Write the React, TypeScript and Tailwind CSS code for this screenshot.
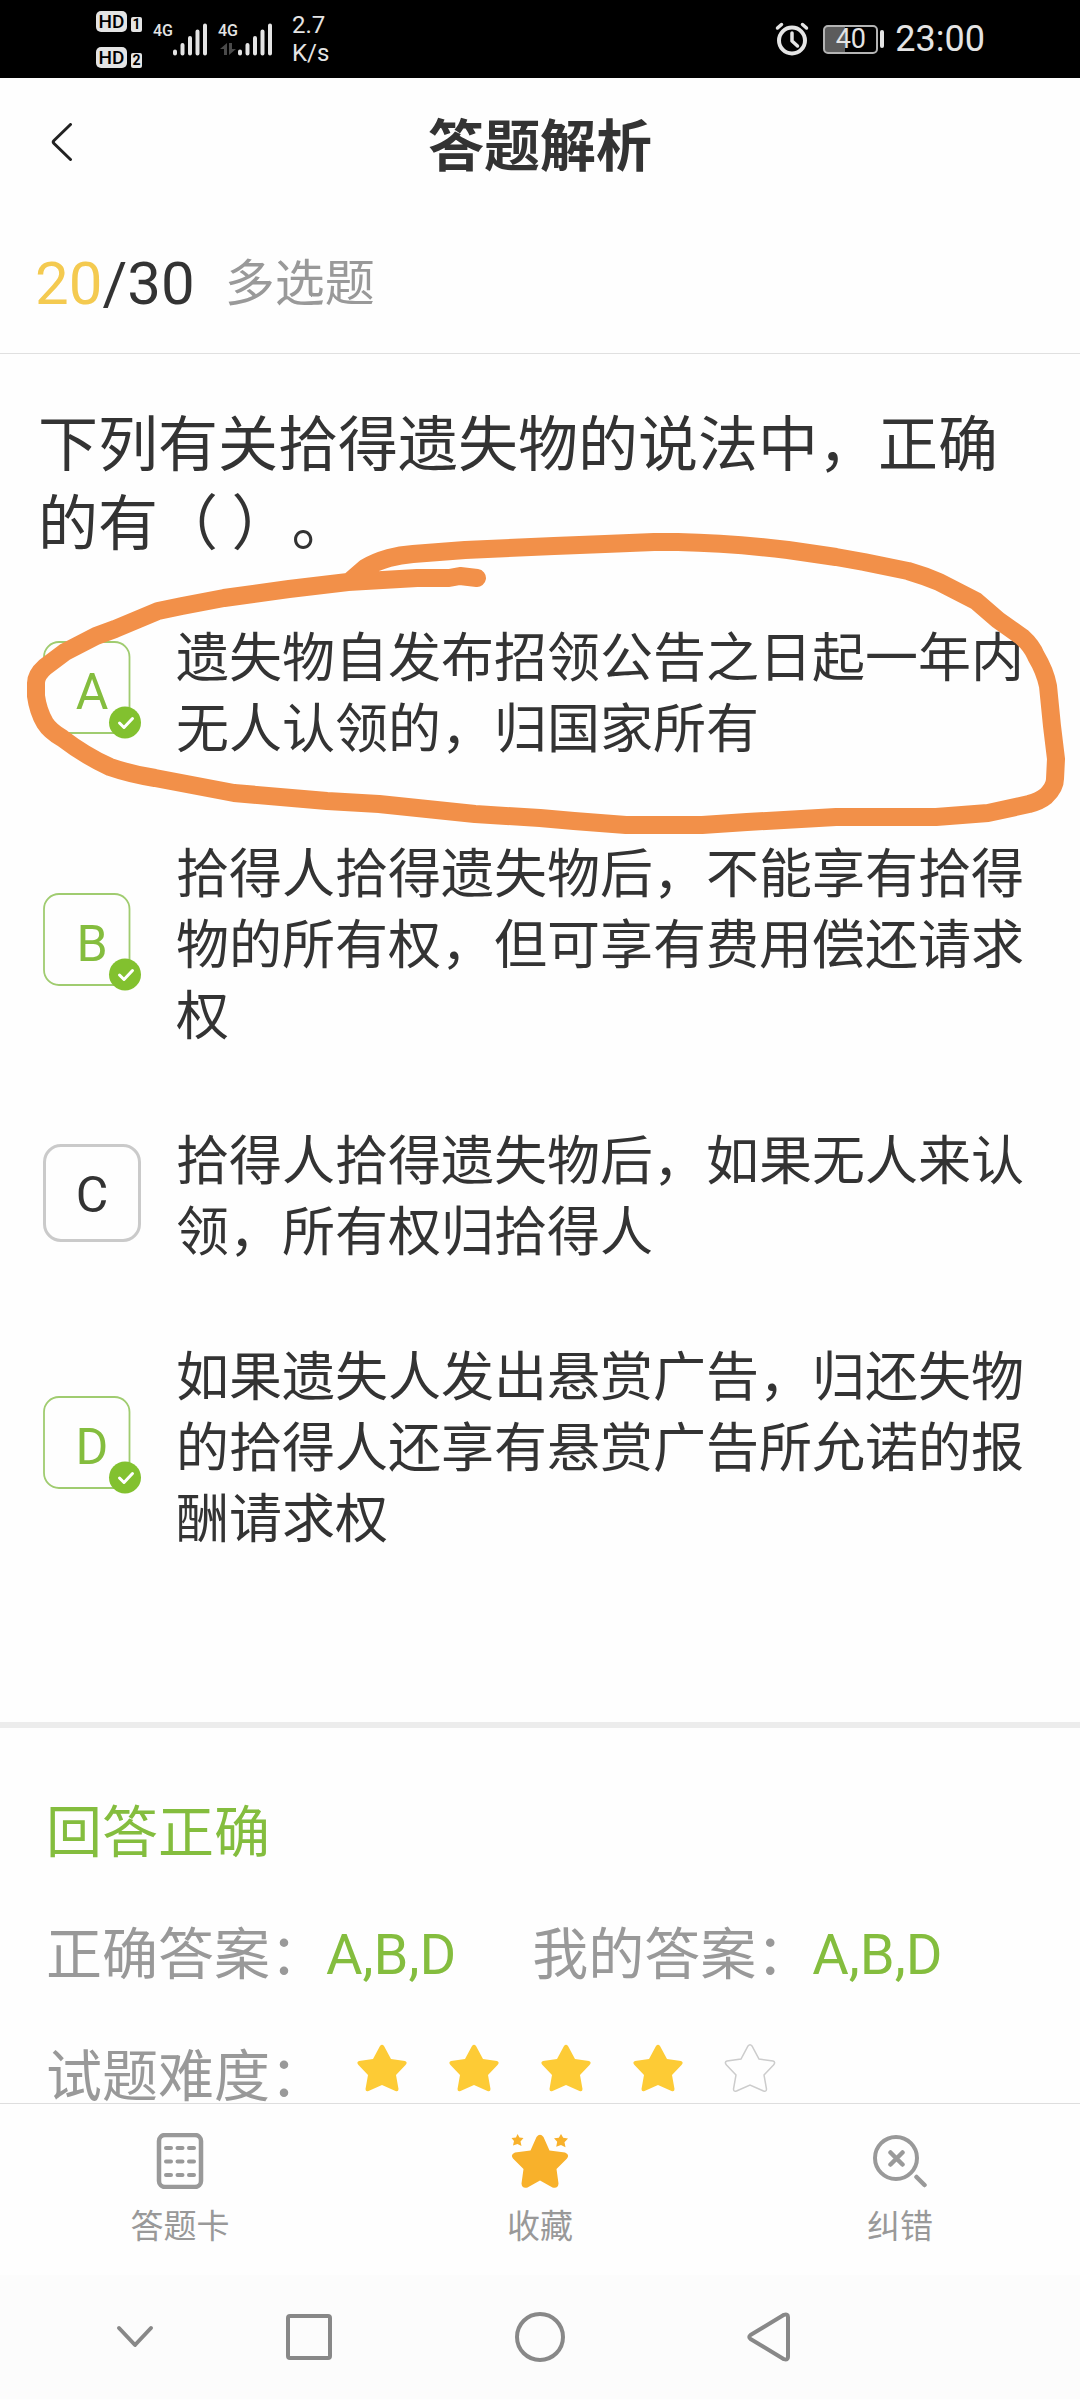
import { useState } from "react";

type Option = {
  key: string;
  text: string;
  correct: boolean;
};

const options: Option[] = [
  { key: "A", text: "遗失物自发布招领公告之日起一年内无人认领的，归国家所有", correct: true },
  { key: "B", text: "拾得人拾得遗失物后，不能享有拾得物的所有权，但可享有费用偿还请求权", correct: true },
  { key: "C", text: "拾得人拾得遗失物后，如果无人来认领，所有权归拾得人", correct: false },
  { key: "D", text: "如果遗失人发出悬赏广告，归还失物的拾得人还享有悬赏广告所允诺的报酬请求权", correct: true },
];

const STAR_PATH =
  "M23 2Q25 -0.5 27 2L34 15L48 17Q51 18 48.5 21L39 31L41.5 45Q41.5 48 38.5 47L25 41L11.5 47Q8.5 48 8.5 45L11 31L1.5 21Q-1 18 2 17L16 15Z";

const SimBadge = ({ n }: { n: number }) => (
  <div className="flex items-end gap-1">
    <span className="flex h-[21px] w-[31px] items-center justify-center rounded-[5px] bg-[#e4e4e4] text-[19px] leading-none font-medium text-black">
      HD
    </span>
    <span className="flex h-[15px] w-[11px] items-center justify-center rounded-[2px] bg-[#e4e4e4] text-[14px] leading-none font-bold text-black">
      {n}
    </span>
  </div>
);

const Signal = ({ data }: { data?: boolean }) => (
  <div className="flex h-[33px] items-end">
    <div className="flex h-full w-[18px] flex-col items-center justify-between">
      <span className="text-[16px] leading-4 font-medium">4G</span>
      {data && (
        <svg width="16" height="13" viewBox="0 0 16 13" fill="#4a4a4a">
          <path d="M7 0v12H4V6H0zM9 0v12l7-6h-4V0z" />
        </svg>
      )}
    </div>
    <svg width="36" height="33" viewBox="0 0 36 33" stroke="currentColor" strokeWidth="4" strokeLinecap="round">
      <path d="M3 28.500v2M10.500 22v8.500M18 15v15.500M25.500 8.500v22M33 2.500v28" />
    </svg>
  </div>
);

const StatusBar = () => (
  <div className="flex h-[78px] items-center bg-black pr-[95px] pl-24 font-['Roboto',sans-serif] text-[#e4e4e4]">
    <div className="mr-3 flex flex-col gap-[15px]">
      <SimBadge n={1} />
      <SimBadge n={2} />
    </div>
    <div className="flex gap-[11px]">
      <Signal />
      <Signal data />
    </div>
    <div className="ml-[19px] text-[24px] leading-7">
      <div>2.7</div>
      <div>K/s</div>
    </div>
    <div className="ml-auto flex items-center">
      <svg width="34" height="34" viewBox="0 0 34 34" fill="none" stroke="currentColor" strokeWidth="4" strokeLinecap="round" strokeLinejoin="round">
        <circle cx="17" cy="18.500" r="13" />
        <path d="M17 11v8l5.500 5M2.500 6l4-3.500M31.500 6l-4-3.500" strokeWidth="3.500" />
      </svg>
      <div className="ml-[14px] flex h-[29px] w-[55px] items-center justify-center rounded-[5px] border-2 border-[#b4b4b4] bg-linear-to-r from-[#5c5c5c] from-40% to-black to-40% text-[27px] leading-none">
        40
      </div>
      <div className="ml-[2px] h-[18px] w-1 rounded-full bg-[#e4e4e4]" />
      <span className="ml-[11px] text-[36px] leading-10">23:00</span>
    </div>
  </div>
);

const OptionBadge = ({ option }: { option: Option }) => {
  if (!option.correct) {
    return (
      <span className="flex size-[98px] shrink-0 items-center justify-center rounded-[18px] border-3 border-[#cacaca] pt-1 font-['Roboto',sans-serif] text-[50px] leading-none">
        {option.key}
      </span>
    );
  }
  return (
    <span className="relative flex size-[98px] shrink-0 items-center justify-center pt-1 font-['Roboto',sans-serif] text-[50px] leading-none text-[#84bd3e]">
      <svg className="absolute inset-0" width="98" height="98" viewBox="0 0 98 98" fill="none">
        <rect x="1" y="1" width="85.500" height="91" rx="15" stroke="#a0cc70" strokeWidth="1.800" />
        <circle cx="82" cy="81.500" r="16" fill="#82c12f" />
        <path d="M76.500 82l4.500 4.500 8.500-9" stroke="#fff" strokeWidth="3" strokeLinecap="round" strokeLinejoin="round" />
      </svg>
      <span className="relative">{option.key}</span>
    </span>
  );
};

// freehand pen loop around the first option
const PenMark = () => (
  <svg
    className="pointer-events-none absolute inset-x-0 -top-[90px] w-full"
    viewBox="0 530 1080 310"
    fill="none"
    stroke="#f29049"
    strokeWidth="18"
    strokeLinecap="round"
    strokeLinejoin="round"
  >
    <path d="M477 579L460 577L449 579L417 579L348 583L289 590L224 599L182 607L158 612L115 630L96 637L65 653L45 668Q36 676 36 684L36 697Q38 712 45 724Q50 732 62 739Q84 756 110 768Q130 775 155 779L234 794L327 802L379 805L475 815L540 819L574 822L626 826L702 826L747 823L836 818L936 818L988 814L1029 805Q1040 802 1046 797Q1055 788 1055 780L1056 760L1052 727L1048 687Q1045 672 1036 657Q1032 647 1022 638L998 621L976 602L939 583Q925 577 908 572L864 563L836 558L788 551Q730 544 678 543L654 543L605 545L554 547L465 551L413 555Q400 556 389 559Q375 563 365 569L350 582" />
  </svg>
);

const answers = [
  { label: "正确答案：", value: "A,B,D" },
  { label: "我的答案：", value: "A,B,D" },
];

const App = () => {
  const [favorite, setFavorite] = useState(true);
  const difficulty = 4;

  return (
    <div className="min-h-screen overflow-x-hidden bg-[#fefefe] font-['Noto_Sans_CJK_SC',sans-serif] text-[#333]">
      <StatusBar />

      <header className="grid h-32 grid-cols-[1fr_auto_1fr] items-center px-[50px]">
        <button type="button" aria-label="返回" className="justify-self-start">
          <svg width="24" height="38" viewBox="0 0 24 38" fill="none" stroke="#222" strokeWidth="3" strokeLinecap="round" strokeLinejoin="round">
            <path d="M20.500 1.500L4 17.500Q2.500 19 4 20.500L20.500 36.500" />
          </svg>
        </button>
        <h1 className="text-[56px] leading-[72px] font-bold">答题解析</h1>
      </header>

      <div className="flex h-[148px] items-center border-b border-[#e0e0e0] pt-2 pl-[35px] font-['Roboto','Noto_Sans_CJK_SC',sans-serif]">
        <span className="text-[60px] leading-[72px]">
          <span className="text-[#f4ca50]">20</span>/30
        </span>
        <span className="ml-[30px] text-[50px] leading-[72px] text-[#999]">多选题</span>
      </div>

      <main>
        <h2 className="pt-[46px] pr-10 pl-[38px] text-[60px] leading-[79px] [text-spacing-trim:space-all]">
          下列有关拾得遗失物的说法中，正确的有（ ）。
        </h2>

        <ul className="mt-[61px] flex flex-col gap-[74px] pb-[171px]">
          {options.map((option) => (
            <li key={option.key} className="relative">
              <label className="flex items-center pr-[50px] pl-[43px]">
                <input type="checkbox" checked={option.correct} readOnly className="sr-only" />
                <OptionBadge option={option} />
                <span className="ml-[35px] text-[53px] leading-[71px]">{option.text}</span>
              </label>
              {option.key === "A" && <PenMark />}
            </li>
          ))}
        </ul>

        <section className="flex flex-col gap-[60px] border-t-6 border-[#ececec] pt-[69px] pl-[46px] text-[56px] leading-[62px] text-[#999]">
          <p className="text-[#84bd3e]">回答正确</p>
          <div className="flex gap-[76px]">
            {answers.map((answer) => (
              <p key={answer.label}>
                {answer.label}
                <span className="font-['Roboto',sans-serif] leading-10 text-[#84bd3e]">{answer.value}</span>
              </p>
            ))}
          </div>
          <div className="flex items-center">
            <span>试题难度：</span>
            <div className="ml-[30px] flex gap-10 pb-2">
              {[1, 2, 3, 4, 5].map((n) => (
                <svg
                  key={n}
                  width="52"
                  height="50"
                  viewBox="-1 -1 52 50"
                  fill={n <= difficulty ? "#fdcb35" : "none"}
                  stroke={n <= difficulty ? "none" : "#ccc"}
                  strokeWidth="1.500"
                >
                  <path d={STAR_PATH} />
                </svg>
              ))}
            </div>
          </div>
        </section>
      </main>

      <footer className="grid grid-cols-3 border-t border-[#dedede] bg-[#fefefe] pt-[29px] pb-[31px] text-[33px] leading-10 text-[#999]">
        <button type="button" className="flex flex-col items-center gap-[15px]">
          <svg width="48" height="56" viewBox="0 0 48 56" fill="none" stroke="#999">
            <rect x="3" y="2" width="42" height="52" rx="6" strokeWidth="4.500" />
            <path d="M10 15h5M21.500 15h5M33 15h5M10 28.500h5M21.500 28.500h5M33 28.500h5M10 42h5M21.500 42h5M33 42h5" strokeWidth="4" strokeLinecap="round" />
          </svg>
          答题卡
        </button>
        <button
          type="button"
          aria-pressed={favorite}
          onClick={() => setFavorite(!favorite)}
          className="flex flex-col items-center gap-[15px]"
        >
          <svg width="58" height="56" viewBox="0 0 58 56" fill={favorite ? "#f8b12b" : "#999"}>
            <path d="M25.500 4Q29 -0.500 32.500 4L38.500 17.500L54 19.500Q59 21.500 56 25.500L45.500 36L47.500 50.500Q47 56 41.500 54.500L29 47.500L16.500 54.500Q11 56 10.500 50.500L12.500 36L2 25.500Q-1 21.500 4 19.500L19.500 17.500Z" />
            <path d="M6.500 1l2 3.500 4 .5-3 3.500 1 4.500-4-2-4.500 1.500 1-4.500L.5 5l4.500-.5zM50 1l2.200 3.800 4.800.7-3.500 3.800 1 5-4.500-2.300-4.800 1.700 1-5L43 5.300l4.800-.5z" />
          </svg>
          收藏
        </button>
        <button type="button" className="flex flex-col items-center gap-[15px]">
          <svg width="54" height="56" viewBox="0 0 54 56" fill="none" stroke="#999" strokeWidth="4" strokeLinecap="round">
            <circle cx="23" cy="25" r="21" />
            <path d="M17.500 19.500l12 12M29.500 19.500l-12 12M43.500 44l8 8" strokeWidth="4.500" />
          </svg>
          纠错
        </button>
      </footer>

      <nav className="flex h-[124px] items-center bg-[#fcfcfc] pl-[116px] text-[#888]">
        <button type="button" aria-label="收起" className="mr-[132px]">
          <svg width="38" height="24" viewBox="0 0 38 24" fill="none" stroke="currentColor" strokeWidth="4" strokeLinecap="round" strokeLinejoin="round">
            <path d="M3 3l16 17L35 3" />
          </svg>
        </button>
        <button type="button" aria-label="最近任务" className="mr-[183px]">
          <svg width="46" height="46" viewBox="0 0 46 46" fill="none" stroke="currentColor" strokeWidth="4">
            <rect x="2" y="2" width="42" height="42" rx="2" />
          </svg>
        </button>
        <button type="button" aria-label="主屏幕" className="mr-[182px]">
          <svg width="50" height="50" viewBox="0 0 50 50" fill="none" stroke="currentColor" strokeWidth="4">
            <circle cx="25" cy="25" r="23" />
          </svg>
        </button>
        <button type="button" aria-label="后退">
          <svg width="43" height="50" viewBox="0 0 43 50" fill="none" stroke="currentColor" strokeWidth="4" strokeLinejoin="round">
            <path d="M37 2.800Q41 1.500 41 5V45Q41 48.500 37 47.200L3.500 27Q1 25 3.500 23Z" />
          </svg>
        </button>
      </nav>
    </div>
  );
};

export default App;
